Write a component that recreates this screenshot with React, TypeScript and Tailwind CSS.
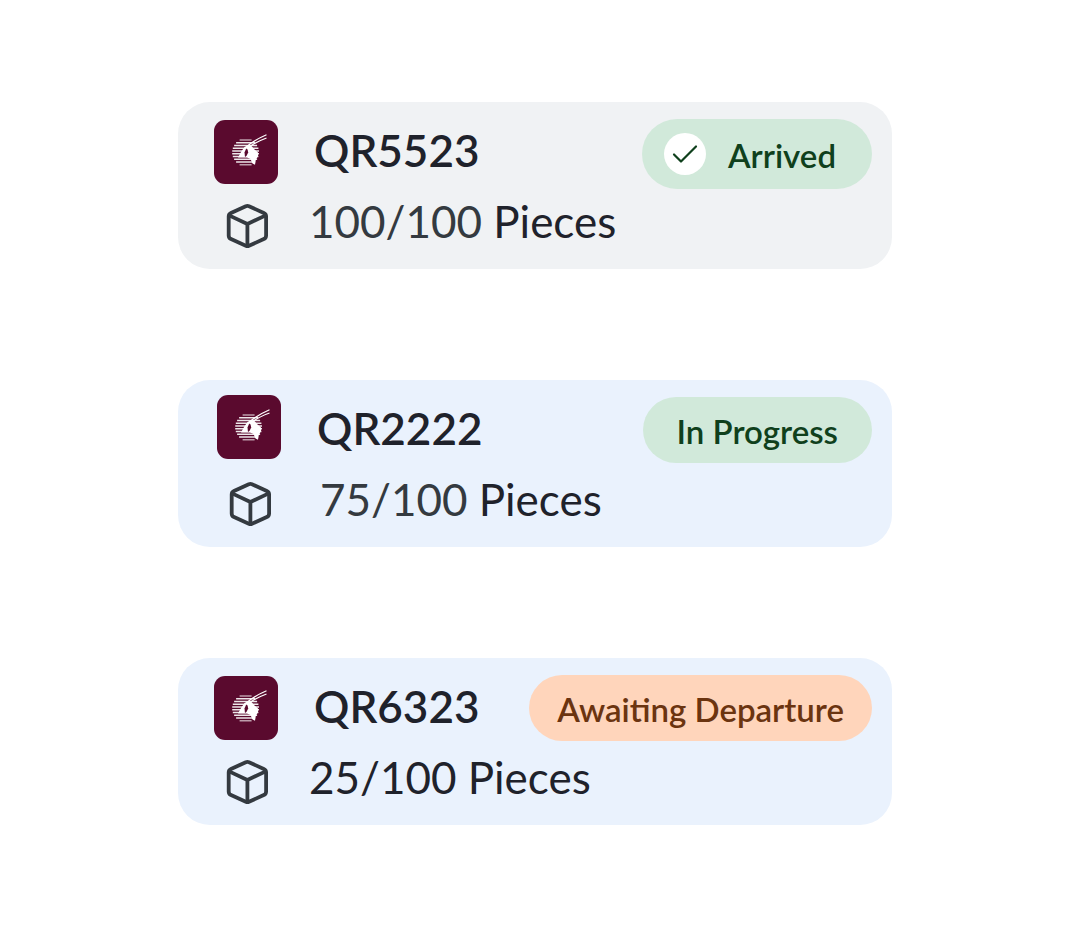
import clsx from "clsx";

type Status = "arrived" | "progress" | "awaiting";

interface Shipment {
  flight: string;
  done: number;
  total: number;
  status: Status;
}

const SHIPMENTS: Shipment[] = [
  { flight: "QR5523", done: 100, total: 100, status: "arrived" },
  { flight: "QR2222", done: 75, total: 100, status: "progress" },
  { flight: "QR6323", done: 25, total: 100, status: "awaiting" },
];

const STYLES = {
  arrived: {
    label: "Arrived",
    card: "bg-[#f0f2f4] pl-9",
    logo: "self-center",
    pieces: "ml-10",
    count: "text-[#343a40]",
    badge: "mt-1 h-[70px] bg-[#d1e9da] pr-9 pl-[22px] text-[#0f401c]",
  },
  progress: {
    label: "In Progress",
    card: "bg-[#eaf2fd] pl-[39px]",
    logo: "self-start",
    pieces: "ml-12",
    count: "text-[#343a40]",
    badge: "h-[66px] bg-[#d1e9da] px-[34px] text-[#0f401c]",
  },
  awaiting: {
    label: "Awaiting Departure",
    card: "bg-[#eaf2fd] pl-9",
    logo: "self-center",
    pieces: "ml-10",
    count: "text-[#1f222b]",
    badge: "h-[66px] bg-[#ffd5bb] px-7 text-[#6b3410]",
  },
};

// half-width of each stripe of the globe, top to bottom
const STRIPES = [6, 9.5, 11.5, 12.8, 13.4, 13.4, 12.8, 11.5, 9.5, 6];

function AirlineLogo({ className }: { className: string }) {
  return (
    <svg viewBox="0 0 64 64" className={clsx("size-16 shrink-0 rounded-[11px] bg-[#5a0a2e]", className)} aria-hidden="true">
      {STRIPES.map((half, i) => (
        <path key={i} d={`M${31.6 - half} ${20 + i * 2.75}h${half * 2}`} stroke="#fff" strokeWidth="1.5" opacity={i === 0 || i === 9 ? 0.6 : 0.9} />
      ))}
      <path d="M34 25 37.5 26 40.5 29.5 44 32.5 44 36 41.8 40 41 44.8 38.5 43.5 36.5 39 33 37.5 24 37.5 27 32 30.5 27Z" fill="#fff" />
      <path d="M32.2 28.5 30.5 32.5 31 37 32.6 35.8 34.2 32.5 33.6 29.5Z" fill="#5a0a2e" />
      <path d="M33 26.5C38 22 44 18.5 52.5 14.8M35.5 26.8C40 23.3 45 20.8 52.5 18" fill="none" stroke="#fff" strokeWidth="1.2" />
    </svg>
  );
}

function BoxIcon() {
  return (
    <svg
      viewBox="0 0 44 48"
      className="mt-2.5 ml-[11px] h-12 w-11 shrink-0 text-[#343a40]"
      fill="none"
      stroke="currentColor"
      strokeWidth="3.8"
      strokeLinecap="round"
      strokeLinejoin="round"
      aria-hidden="true"
    >
      <path d="M20.8 4.2a4 4 0 0 1 3.2 0L38.8 11a4 4 0 0 1 2.3 3.6v18.8a4 4 0 0 1-2.3 3.6L24 43.8a4 4 0 0 1-3.2 0L6 37a4 4 0 0 1-2.3-3.6V14.6A4 4 0 0 1 6 11Z" />
      <path d="M4.6 13.6 22.4 22l17.8-8.4M22.4 22v21.8" />
    </svg>
  );
}

function StatusBadge({ status }: { status: Status }) {
  const { label, badge } = STYLES[status];

  return (
    <div className={clsx("ml-auto flex shrink-0 items-center self-center rounded-full text-[33px] leading-10 font-semibold", badge)}>
      {status === "arrived" && (
        <svg viewBox="0 0 42 42" className="mr-[22px] size-[42px] rounded-full bg-white" aria-hidden="true">
          <path d="M10 21.5l7 7 15-15" fill="none" stroke="currentColor" strokeWidth="2.2" strokeLinecap="round" strokeLinejoin="round" />
        </svg>
      )}
      <span className="pt-0.5">{label}</span>
    </div>
  );
}

function ShipmentCard({ flight, done, total, status }: Shipment) {
  const styles = STYLES[status];

  return (
    <article className={clsx("rounded-[32px] pt-[15px] pr-5 pb-3.5", styles.card)}>
      <div className="flex h-[70px] items-start">
        <AirlineLogo className={styles.logo} />
        <h2 className="ml-9 text-[44px] leading-[66px] font-semibold">{flight}</h2>
        <StatusBadge status={status} />
      </div>
      <div className="flex items-center">
        <BoxIcon />
        <p className={clsx("text-[44px] leading-[68px]", styles.pieces)}>
          <span className={styles.count}>
            {done}/{total}
          </span>{" "}
          Pieces
        </p>
      </div>
    </article>
  );
}

export default function App() {
  return (
    <main className="flex min-h-screen flex-col gap-[111px] bg-white pt-[102px] pr-[181px] pb-[103px] pl-[178px] font-['Lato',sans-serif] text-[#1f222b]">
      {SHIPMENTS.map((shipment) => (
        <ShipmentCard key={shipment.flight} {...shipment} />
      ))}
    </main>
  );
}
